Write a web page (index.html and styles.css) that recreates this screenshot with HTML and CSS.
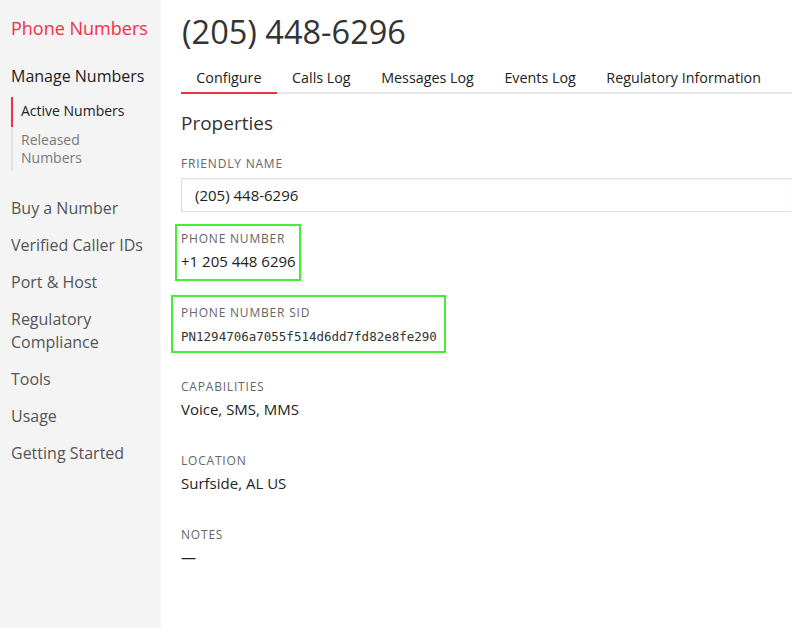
FILE: index.html
```html
<!DOCTYPE html>
<html>
<head>
<meta charset="utf-8">
<link rel="stylesheet" href="styles.css">
</head>
<body>
<div class="layout">
  <aside class="sidebar">
    <div class="product">Phone Numbers</div>
    <div class="group">
      <div class="group-title">Manage Numbers</div>
      <ul class="subnav">
        <li class="sub active">Active Numbers</li>
        <li class="sub">Released<br>Numbers</li>
      </ul>
    </div>
    <ul class="nav">
      <li>Buy a Number</li>
      <li>Verified Caller IDs</li>
      <li>Port &amp; Host</li>
      <li>Regulatory<br>Compliance</li>
      <li>Tools</li>
      <li>Usage</li>
      <li>Getting Started</li>
    </ul>
  </aside>
  <main class="main">
    <h1 class="title">(205) 448-6296</h1>
    <nav class="tabs">
      <span class="tab active">Configure</span>
      <span class="tab">Calls Log</span>
      <span class="tab">Messages Log</span>
      <span class="tab">Events Log</span>
      <span class="tab">Regulatory Information</span>
    </nav>
    <h2 class="section">Properties</h2>
    <div class="field f-first">
      <div class="label">Friendly Name</div>
      <div class="input">(205) 448-6296</div>
    </div>
    <div class="field f-phone">
      <span class="mark mark-phone"></span>
      <div class="label">Phone Number</div>
      <div class="value">+1 205 448 6296</div>
    </div>
    <div class="field f-next">
      <span class="mark mark-sid"></span>
      <div class="label">Phone Number SID</div>
      <div class="value mono">PN1294706a7055f514d6dd7fd82e8fe290</div>
    </div>
    <div class="field f-cap">
      <div class="label">Capabilities</div>
      <div class="value">Voice, SMS, MMS</div>
    </div>
    <div class="field f-next">
      <div class="label">Location</div>
      <div class="value">Surfside, AL US</div>
    </div>
    <div class="field f-next">
      <div class="label">Notes</div>
      <div class="value">—</div>
    </div>
  </main>
</div>
</body>
</html>
```
FILE: styles.css
```css
* { box-sizing: border-box; }
html, body { margin: 0; padding: 0; }
body {
  font-family: "Open Sans", "Liberation Sans", sans-serif;
  color: #222;
  background: #fff;
  width: 792px;
  height: 628px;
  overflow: hidden;
}
.layout { display: flex; height: 628px; }
.sidebar {
  width: 161px;
  flex: none;
  background: #f4f4f4;
  padding: 16px 0 0 11px;
}
.product {
  color: #f22f46;
  font-size: 18px;
  line-height: 24px;
}
.group { margin-top: 24px; }
.group-title {
  font-size: 16px;
  line-height: 24px;
  color: #222;
}
.subnav {
  list-style: none;
  margin: 9px 0 0 0;
  padding: 0;
}
.sub {
  border-left: 2px solid #e2e2e2;
  padding: 4px 0 4px 8px;
  font-size: 14px;
  line-height: 18px;
  color: #7a7a7a;
}
.sub.active {
  border-left-color: #f22f46;
  color: #222;
  padding: 5px 0 7px 8px;
}
.nav {
  list-style: none;
  margin: 26px 0 0 0;
  padding: 0;
  display: flex;
  flex-direction: column;
  gap: 14px;
}
.nav li {
  font-size: 16px;
  line-height: 23px;
  color: #555;
}
.main {
  flex: 1;
  padding: 13px 0 0 20px;
  min-width: 0;
}
.title {
  margin: 0 0 0 1px;
  font-weight: 400;
  font-size: 32.5px;
  line-height: 38px;
  color: #333;
}
.tabs {
  display: flex;
  margin-top: 15px;
  border-bottom: 2px solid #e6e6e6;
}
.tab {
  padding: 2px 15.3px 4px;
  font-size: 14.3px;
  line-height: 20px;
  color: #222;
  margin-bottom: -2px;
  border-bottom: 2px solid transparent;
}
.tab.active { border-bottom-color: #f22f46; }
.section {
  margin: 16px 0 0 0;
  font-weight: 400;
  font-size: 19px;
  line-height: 26px;
  color: #333;
}
.field { position: relative; }
.f-first { margin-top: 20px; }
.f-phone { margin-top: 19px; }
.f-next { margin-top: 34px; }
.f-cap { margin-top: 32px; }
.label {
  font-size: 12px;
  line-height: 16px;
  letter-spacing: 0.8px;
  text-transform: uppercase;
  color: #666;
}
.value {
  margin-top: 4px;
  font-size: 15px;
  line-height: 20px;
  color: #222;
}
.value.mono {
  margin-top: 6px;
  font-family: "DejaVu Sans Mono", "Liberation Mono", monospace;
  font-size: 12.5px;
  color: #333;
}
.input {
  margin-top: 6px;
  height: 34px;
  border: 1px solid #e0e0e0;
  border-right: none;
  box-shadow: inset 0 1px 2px rgba(0,0,0,0.05);
  padding: 6px 13px;
  font-size: 15px;
  line-height: 20px;
  color: #222;
}
.mark {
  position: absolute;
  border: 2px solid #44ee33;
  pointer-events: none;
}
.mark-phone { left: -6px; top: -7px; width: 126px; height: 57px; }
.mark-sid { left: -10px; top: -10px; width: 275px; height: 58px; }
```
